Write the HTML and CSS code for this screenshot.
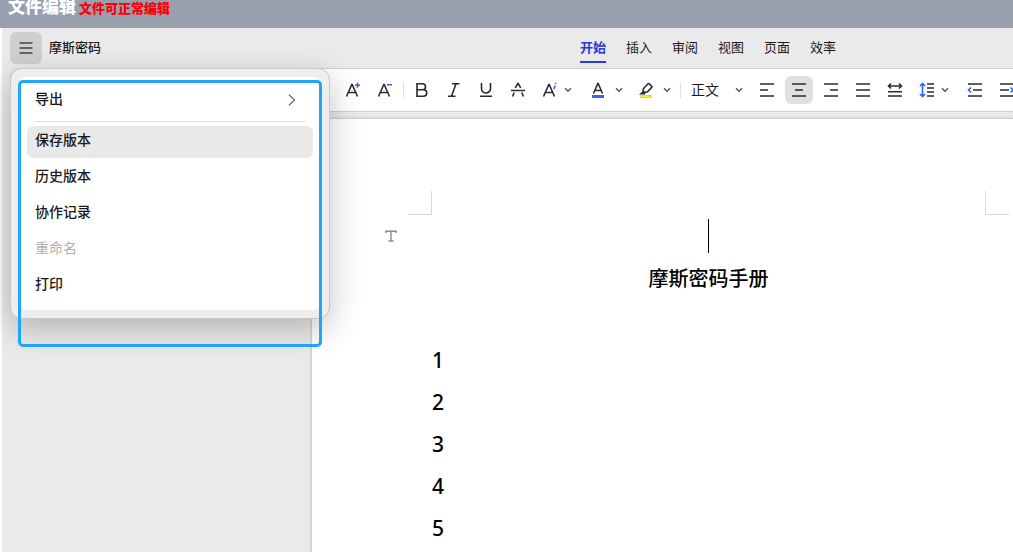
FILE: index.html
```html
<!DOCTYPE html>
<html lang="zh-CN">
<head>
<meta charset="utf-8">
<title>摩斯密码</title>
<meta name="viewport" content="width=device-width, initial-scale=1">
<link rel="stylesheet" href="styles.css">
</head>
<body>
<svg class="defs" aria-hidden="true">
  <symbol id="chev" viewBox="0 0 8 6"><path d="M1 1.200l3 3 3-3" fill="none" stroke="#555" stroke-width="1.400"/></symbol>
</svg>
<header class="banner">
  <h1 class="banner-title">文件编辑</h1>
  <span class="banner-note">文件可正常编辑</span>
</header>
<div class="app">
  <div class="titlebar">
    <button class="menu-btn" type="button" aria-label="菜单" aria-expanded="true">
      <svg width="14" height="12" viewBox="0 0 14 12"><path d="M.5 1h13M.5 6h13M.5 11h13" stroke="#444" stroke-width="1.600"/></svg>
    </button>
    <span class="doc-name">摩斯密码</span>
    <nav class="tabs">
      <a class="tab tab-active" href="#">开始</a>
      <a class="tab" href="#">插入</a>
      <a class="tab" href="#">审阅</a>
      <a class="tab" href="#">视图</a>
      <a class="tab" href="#">页面</a>
      <a class="tab" href="#">效率</a>
    </nav>
  </div>

  <div class="toolbar" role="toolbar">
    <button class="tool" type="button" aria-label="增大字号"><svg class="ico" viewBox="0 0 16 16"><path class="ln" d="M1.500 14.500L6.800 2.500h.4l5.300 12M3.500 10.500h7"/><path class="bl" d="M12.500 .8v5M10 3.300h5"/></svg></button>
    <button class="tool" type="button" aria-label="减小字号"><svg class="ico" viewBox="0 0 16 16"><path class="ln" d="M1.500 14.500L6.800 2.500h.4l5.300 12M3.500 10.500h7"/><path class="bl" d="M10 2.800h5"/></svg></button>
    <span class="sep"></span>
    <button class="tool" type="button" aria-label="加粗"><svg class="ico" viewBox="0 0 16 16"><path class="ln" d="M3 1.700h5.500a3 3 0 0 1 0 6H3zM3 7.700h6.500a3.200 3.200 0 0 1 0 6.500H3z"/></svg></button>
    <button class="tool" type="button" aria-label="斜体"><svg class="ico" viewBox="0 0 16 16"><path class="ln" d="M6 1.700h7.500M2 14.200h7.500M10 1.700L5.500 14.200"/></svg></button>
    <button class="tool" type="button" aria-label="下划线"><svg class="ico" viewBox="0 0 16 16"><path class="ln" d="M3.500 1v5.500a4.500 4.500 0 0 0 9 0V1M2 14.300h12"/></svg></button>
    <button class="tool" type="button" aria-label="删除线"><svg class="ico" viewBox="0 0 16 16"><path class="ln" d="M1 8.500h14M5.300 5.800L7.800 1.500h.4l2.500 4.300M4.300 10.500L2.500 14.500M11.700 10.500l1.800 4"/></svg></button>
    <button class="tool tool-split tight" type="button" aria-label="文字效果"><svg class="ico" viewBox="0 0 16 16"><path class="ln" d="M1.500 14.500L6.800 2.500h.4l5.300 12M3.500 10.500h7"/><path class="bl" d="M13 3.500L12 7M13.700 .8l-.3 1.400"/></svg><svg class="chev"><use href="#chev"/></svg></button>
    <button class="tool tool-split" type="button" aria-label="字体颜色"><svg class="ico" viewBox="0 0 16 16"><path class="ln" d="M3.500 11.500L7.800 1.500h.4l4.300 10M4.800 8.500h6.400"/><path d="M2 13h12v3H2z" fill="#3a63e8"/></svg><svg class="chev"><use href="#chev"/></svg></button>
    <button class="tool tool-split" type="button" aria-label="突出显示"><svg class="ico" viewBox="0 0 16 16"><path class="ln" d="M5.500 6.500L10 1.800q.6-.5 1.200 0L13.800 4.200q.5.600 0 1.200L9.500 9.800l-3.500.6-1-1zM5.300 9.800L3 11.800h3.300l.8-1"/><path d="M2.500 13.500h11v2h-11z" fill="#fcf51c" stroke="#d6cf20" stroke-width=".8"/></svg><svg class="chev"><use href="#chev"/></svg></button>
    <span class="sep"></span>
    <div class="style-box">
      <select class="style-select" aria-label="段落样式"><option>正文</option><option>标题</option></select>
      <svg class="chev"><use href="#chev"/></svg>
    </div>
    <button class="tool" type="button" aria-label="左对齐"><svg class="ico" viewBox="0 0 16 16"><path class="ln" d="M1 2h14M1 8h8M1 14h14"/></svg></button>
    <button class="tool tool-on" type="button" aria-label="居中" aria-pressed="true"><svg class="ico" viewBox="0 0 16 16"><path class="ln" d="M1 2h14M4 8h8M1 14h14"/></svg></button>
    <button class="tool" type="button" aria-label="右对齐"><svg class="ico" viewBox="0 0 16 16"><path class="ln" d="M1 2h14M7 8h8M1 14h14"/></svg></button>
    <button class="tool" type="button" aria-label="两端对齐"><svg class="ico" viewBox="0 0 16 16"><path class="ln" d="M1 2h14M1 8h14M1 14h14"/></svg></button>
    <button class="tool" type="button" aria-label="分散对齐"><svg class="ico" viewBox="0 0 16 16"><path class="ln" d="M1.500 4h13M4 1.500L1.500 4 4 6.500M12 1.500L14.500 4 12 6.500M1 9.700h14M1 14h14"/></svg></button>
    <button class="tool tool-split tight" type="button" aria-label="行距"><svg class="ico" viewBox="0 0 16 16"><path class="ln" d="M8 2h7M8 6h7M8 10h7M8 14h7"/><path class="bl" d="M3.500 1.500v13M1 4l2.500-2.500L6 4M1 12l2.500 2.500L6 12"/></svg><svg class="chev"><use href="#chev"/></svg></button>
    <button class="tool" type="button" aria-label="减少缩进"><svg class="ico" viewBox="0 0 16 16"><path class="ln" d="M1 2h14M6 8h9M1 14h14"/><path class="bl" d="M4 5.500L1.500 8 4 10.500"/></svg></button>
    <button class="tool" type="button" aria-label="增加缩进"><svg class="ico" viewBox="0 0 16 16"><path class="ln" d="M1 2h14M1 8h9M1 14h14"/><path class="bl" d="M11.500 5.500L14 8l-2.500 2.500"/></svg></button>
  </div>

  <div class="workspace">
    <aside class="sidebar"></aside>
    <main class="page">
      <div class="corners"><span class="corner corner-left"></span><span class="corner corner-right"></span></div>
      <div class="cursor-row">
        <svg class="mark" width="12" height="12" viewBox="0 0 12 12"><path d="M.8 3V1.200h10.400V3M6 1.200v10M3.500 11h5" fill="none" stroke="#8c8c8c" stroke-width="1.400"/></svg>
        <span class="caret"></span>
      </div>
      <h2 class="doc-title">摩斯密码手册</h2>
      <div class="lines">
        <p class="line">1</p>
        <p class="line">2</p>
        <p class="line">3</p>
        <p class="line">4</p>
        <p class="line">5</p>
      </div>
    </main>
  </div>

  <div class="menu">
    <div class="menu-list" role="menu">
      <button class="item" type="button" role="menuitem">导出<svg class="item-arrow" width="8" height="12" viewBox="0 0 8 12"><path d="M1 .8L6.500 6 1 11.200" fill="none" stroke="#666" stroke-width="1.200"/></svg></button>
      <hr class="rule">
      <button class="item item-hover" type="button" role="menuitem">保存版本</button>
      <button class="item" type="button" role="menuitem">历史版本</button>
      <button class="item" type="button" role="menuitem">协作记录</button>
      <button class="item" type="button" role="menuitem" disabled>重命名</button>
      <button class="item" type="button" role="menuitem">打印</button>
    </div>
  </div>
  <div class="highlight"></div>
</div>
</body>
</html>
```
FILE: styles.css
```css
* { box-sizing: border-box; }

body {
  margin: 0;
  height: 100vh;
  display: flex;
  flex-direction: column;
  overflow: hidden;
  background: #fff;
  color: #1a1a1a;
  font-family: "Noto Sans CJK SC", "Noto Sans", sans-serif;
  font-size: 14px;
  font-weight: 500;
}

button, select {
  margin: 0;
  padding: 0;
  border: 0;
  background: none;
  color: inherit;
  font: inherit;
}

.defs { display: none; }

.banner {
  position: relative;
  z-index: 3;
  flex: none;
  display: flex;
  align-items: flex-start;
  gap: 3px;
  height: 28px;
  padding-left: 8px;
  background: #989fad;
}
.banner-title {
  margin: 0;
  color: #fff;
  font-size: 17px;
  font-weight: 900;
  line-height: 12px;
}
.banner-note {
  color: #fb0007;
  font-size: 13px;
  font-weight: 900;
  line-height: 15px;
}

.app {
  position: relative;
  flex: 1;
  display: flex;
  flex-direction: column;
  min-height: 0;
  margin-left: 2px;
  background: #eaeaea;
}

.titlebar {
  flex: none;
  display: flex;
  align-items: center;
  height: 40px;
  padding-left: 8px;
}
.menu-btn {
  flex: none;
  display: grid;
  place-items: center;
  width: 32px;
  height: 32px;
  border-radius: 6px;
  background: #cfcfcf;
}
.doc-name {
  flex: none;
  width: 538px;
  padding: 0 0 3px 7px;
  font-size: 13px;
}
.tabs {
  display: flex;
  gap: 20px;
}
.tab {
  height: 30px;
  color: #1a1a1a;
  font-size: 13px;
  font-weight: 400;
  line-height: 28px;
  text-decoration: none;
  white-space: nowrap;
}
.tab-active {
  border-bottom: 2px solid #2b3bd9;
  color: #2b3bd9;
  font-weight: 700;
}

.toolbar {
  flex: none;
  display: flex;
  align-items: center;
  gap: 4px;
  height: 44px;
  margin-left: 8px;
  padding-left: 328px;
  overflow: hidden;
  border: 1px solid #d0d0d0;
  border-right: 0;
  border-radius: 8px 0 0 8px;
  background: #fff;
}
.tool {
  flex: none;
  display: flex;
  align-items: center;
  justify-content: center;
  width: 28px;
  height: 28px;
  border-radius: 6px;
}
.tool-on { background: #e0e0e0; }
.tool-split {
  justify-content: flex-start;
  gap: 9px;
  width: 44px;
  padding-left: 6px;
}
.tight {
  gap: 6px;
  width: 44px;
}
.ico { flex: none; width: 16px; height: 16px; }
.chev { flex: none; width: 8px; height: 6px; }
.ln { fill: none; stroke: #2b2b2b; stroke-width: 1.6; }
.bl { fill: none; stroke: #2f62f5; stroke-width: 1.6; }
.sep {
  flex: none;
  width: 1px;
  height: 16px;
  background: #dcdfe8;
}
.style-box {
  flex: none;
  display: flex;
  align-items: center;
  width: 64px;
  padding-left: 6px;
}
.style-select {
  appearance: none;
  width: 44px;
  height: 28px;
  padding-bottom: 2px;
  outline: 0;
  font-size: 14px;
  font-weight: 400;
}

.workspace {
  flex: 1;
  display: flex;
  min-height: 0;
  padding-top: 6px;
}
.sidebar { flex: none; width: 309px; }
.page {
  flex: 1;
  min-width: 0;
  overflow: hidden;
  padding: 72px 4px 0 96px;
  border: solid #d0d0d0;
  border-width: 1px 0 0 1px;
  background: #fff;
  box-shadow: 0 0 3px rgba(0, 0, 0, 0.12);
  color: #000;
}
.corners {
  display: flex;
  justify-content: space-between;
}
.corner {
  width: 24px;
  height: 24px;
  border-bottom: 1px solid #d8d8d8;
}
.corner-left { border-right: 1px solid #d8d8d8; }
.corner-right { border-left: 1px solid #d8d8d8; }
.cursor-row {
  display: flex;
  align-items: center;
  height: 34px;
  margin: 4px -24px 0 -23px;
}
.mark { margin-right: auto; }
.caret {
  width: 1px;
  height: 34px;
  margin-right: auto;
  margin-left: -14px;
  background: #000;
}
.doc-title {
  margin: 5px 24px 0;
  font-size: 20px;
  font-weight: 500;
  line-height: 40px;
  text-align: center;
}
.lines { margin: 41px 24px 0; }
.line {
  margin: 0;
  font-family: "Noto Sans", "Noto Sans CJK SC", sans-serif;
  font-size: 21px;
  line-height: 42px;
}

.menu {
  position: absolute;
  top: 40px;
  left: 8px;
  width: 320px;
  padding: 8px;
  border: 1px solid #c8c8c8;
  border-radius: 12px;
  background: #eee;
  box-shadow: 0 10px 32px rgba(0, 0, 0, 0.24);
}
.menu-list {
  display: flex;
  flex-direction: column;
  gap: 4px;
  padding: 8px;
  border-radius: 8px;
  background: #fff;
}
.item {
  display: flex;
  align-items: center;
  justify-content: space-between;
  height: 32px;
  padding: 0 17px 6px 8px;
  border-radius: 6px;
  font-size: 14px;
  text-align: left;
}
.item-arrow { margin-top: 3px; }
.item-hover { background: #e9e9e9; }
.item:disabled {
  color: #b0b0b0;
  font-weight: 400;
}
.rule {
  width: calc(100% - 16px);
  height: 1px;
  margin: 0 8px;
  border: 0;
  background: #dddde4;
}

.highlight {
  position: absolute;
  top: 52px;
  left: 16px;
  width: 304px;
  height: 267px;
  border: 3px solid #22a4fb;
  border-radius: 5px;
  pointer-events: none;
}
```
